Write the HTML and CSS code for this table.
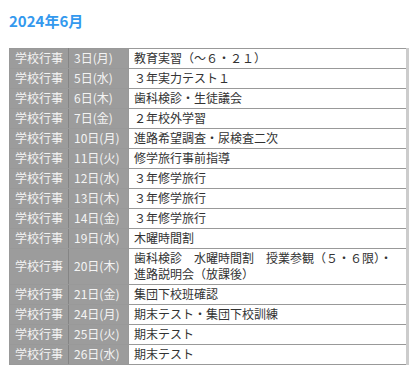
FILE: index.html
```html
<!DOCTYPE html>
<html lang="ja">
<head>
<meta charset="utf-8">
<link rel="stylesheet" href="styles.css">
</head>
<body>
<div class="page">
  <h2 class="month">2024年6月</h2>
  <table class="events">
    <tr><th class="cat">学校行事</th><th class="date">3日(月)</th><td class="desc">教育実習（～６・２１）</td></tr>
    <tr><th class="cat">学校行事</th><th class="date">5日(水)</th><td class="desc">３年実力テスト１</td></tr>
    <tr><th class="cat">学校行事</th><th class="date">6日(木)</th><td class="desc">歯科検診・生徒議会</td></tr>
    <tr><th class="cat">学校行事</th><th class="date">7日(金)</th><td class="desc">２年校外学習</td></tr>
    <tr><th class="cat">学校行事</th><th class="date">10日(月)</th><td class="desc">進路希望調査・尿検査二次</td></tr>
    <tr><th class="cat">学校行事</th><th class="date">11日(火)</th><td class="desc">修学旅行事前指導</td></tr>
    <tr><th class="cat">学校行事</th><th class="date">12日(水)</th><td class="desc">３年修学旅行</td></tr>
    <tr><th class="cat">学校行事</th><th class="date">13日(木)</th><td class="desc">３年修学旅行</td></tr>
    <tr><th class="cat">学校行事</th><th class="date">14日(金)</th><td class="desc">３年修学旅行</td></tr>
    <tr><th class="cat">学校行事</th><th class="date">19日(水)</th><td class="desc">木曜時間割</td></tr>
    <tr><th class="cat">学校行事</th><th class="date">20日(木)</th><td class="desc">歯科検診　水曜時間割　授業参観（５・６限）・進路説明会（放課後）</td></tr>
    <tr><th class="cat">学校行事</th><th class="date">21日(金)</th><td class="desc">集団下校班確認</td></tr>
    <tr><th class="cat">学校行事</th><th class="date">24日(月)</th><td class="desc">期末テスト・集団下校訓練</td></tr>
    <tr><th class="cat">学校行事</th><th class="date">25日(火)</th><td class="desc">期末テスト</td></tr>
    <tr><th class="cat">学校行事</th><th class="date">26日(水)</th><td class="desc">期末テスト</td></tr>
  </table>
</div>
</body>
</html>
```

FILE: styles.css
```css
html, body {
  margin: 0;
  padding: 0;
  background: #ffffff;
}

body {
  font-family: "Noto Sans CJK JP", "Noto Sans", sans-serif;
  color: #333333;
}

.page {
  padding: 11px 11px 0 9px;
}

.month {
  margin: 0 0 17px 0;
  font-size: 15px;
  line-height: 20px;
  font-weight: bold;
  color: #3399ee;
}

.events {
  border-collapse: collapse;
  width: 400px;
  font-size: 12px;
  line-height: 16px;
  border-top: 1px solid #b5b5b5;
  border-right: 3px solid #cccccc;
}

.events th,
.events td {
  border: 1px solid #999999;
  padding: 1px 5px 2px 5px;
  text-align: left;
  font-weight: normal;
  vertical-align: middle;
}

.events th {
  background: #9c9c9c;
  color: #f4f4f4;
  white-space: nowrap;
}

.events .cat {
  width: 47px;
  border-right-color: #858585;
}

.events .date {
  width: 49px;
}

.events .desc {
  background: #ffffff;
  color: #333333;
}
```
